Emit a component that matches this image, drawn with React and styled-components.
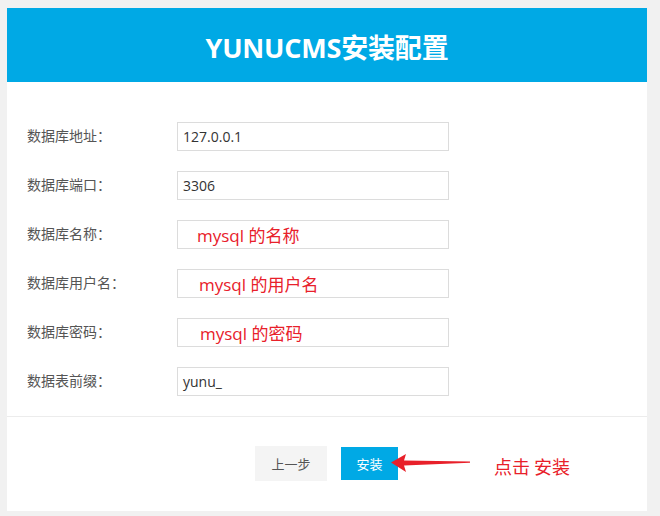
import React from "react";
import styled, { createGlobalStyle } from "styled-components";

const fields = [
    { label: "数据库地址：", value: "127.0.0.1" },
    { label: "数据库端口：", value: "3306" },
    { label: "数据库名称：", note: "mysql 的名称", indent: 14 },
    { label: "数据库用户名：", note: "mysql 的用户名", indent: 16 },
    { label: "数据库密码：", note: "mysql 的密码", indent: 17 },
    { label: "数据表前缀：", value: "yunu_" },
];

const App = () => {
    return (
        <Page>
            <GlobalStyle />
            <Card>
                <Header>
                    <Title>YUNUCMS安装配置</Title>
                </Header>
                <Form>
                    {fields.map((f) => (
                        <Row key={f.label}>
                            <Label>{f.label}</Label>
                            <InputBox>
                                {f.value && <InputValue>{f.value}</InputValue>}
                                {f.note && <Note $indent={f.indent}>{f.note}</Note>}
                            </InputBox>
                        </Row>
                    ))}
                </Form>
                <Footer>
                    <Button $primary={false}>上一步</Button>
                    <Button $primary>安装</Button>
                    <Callout>
                        <svg width="80" height="22" viewBox="0 0 80 22">
                            <path
                                d="M0 10.5 L15 2 L13 8.5 L79 9.6 L79 10.8 L13 13.5 L15 20 Z"
                                fill="#e8202a"
                            />
                        </svg>
                        <CalloutText>点击 安装</CalloutText>
                    </Callout>
                </Footer>
            </Card>
        </Page>
    );
};

export default App;

const GlobalStyle = createGlobalStyle`
    html, body {
        margin: 0;
        padding: 0;
        background: #f1f1f1;
    }
    body {
        font-family: "Open Sans", "Noto Sans CJK SC", sans-serif;
    }
`;

const Page = styled.div`
    width: 660px;
    height: 516px;
    box-sizing: border-box;
    padding: 8px 13px 0 7px;
    background: #f1f1f1;
`;

const Card = styled.div`
    width: 640px;
    height: 503px;
    background: #fff;
    display: flex;
    flex-direction: column;
`;

const Header = styled.div`
    height: 74px;
    background: #00a9e5;
    display: flex;
    align-items: center;
    justify-content: center;
`;

const Title = styled.h1`
    margin: 0;
    color: #fff;
    font-size: 27px;
    font-weight: 700;
    letter-spacing: -0.2px;
    font-family: "Open Sans", "Noto Sans CJK SC", sans-serif;
    padding-top: 2px;
`;

const Form = styled.div`
    display: flex;
    flex-direction: column;
    gap: 20px;
    padding: 40px 0 20px;
    border-bottom: 1px solid #ececec;
`;

const Row = styled.div`
    display: flex;
    align-items: center;
    padding-left: 20px;
`;

const Label = styled.div`
    width: 150px;
    padding-bottom: 3px;
    font-size: 14px;
    color: #555;
    font-family: "Noto Sans CJK SC", sans-serif;
`;

const InputBox = styled.div`
    width: 272px;
    height: 29px;
    box-sizing: border-box;
    border: 1px solid #dcdcdc;
    display: flex;
    align-items: center;
    padding-left: 5px;
`;

const InputValue = styled.span`
    font-size: 14px;
    color: #333;
    font-family: "Open Sans", sans-serif;
`;

const Note = styled.span`
    margin-left: ${(p) => p.$indent}px;
    font-size: 17px;
    color: #e8202a;
    font-family: "Open Sans", "Noto Sans CJK SC", sans-serif;
`;

const Footer = styled.div`
    flex: 1;
    display: flex;
    align-items: center;
    padding-left: 248px;
    padding-bottom: 2px;
`;

const Button = styled.div`
    display: flex;
    align-items: center;
    justify-content: center;
    width: ${(p) => (p.$primary ? "57px" : "72px")};
    height: ${(p) => (p.$primary ? "33px" : "35px")};
    margin-right: ${(p) => (p.$primary ? "0" : "14px")};
    background: ${(p) => (p.$primary ? "#00a9e5" : "#f4f4f4")};
    color: ${(p) => (p.$primary ? "#fff" : "#555")};
    font-size: 13px;
    font-family: "Noto Sans CJK SC", sans-serif;
`;

const Callout = styled.div`
    display: flex;
    align-items: center;
    margin-left: -7px;
    position: relative;
`;

const CalloutText = styled.span`
    margin-left: 23px;
    margin-top: 5px;
    font-size: 18px;
    color: #e8202a;
    font-family: "Noto Sans CJK SC", sans-serif;
`;
